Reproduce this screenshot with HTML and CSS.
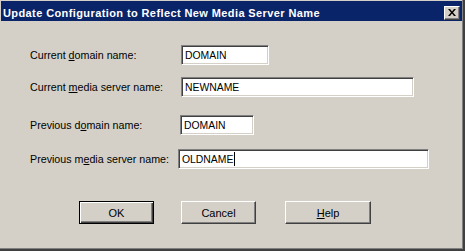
FILE: index.html
```html
<!DOCTYPE html>
<html lang="en">
<head>
<meta charset="UTF-8" />
<title>Update Configuration to Reflect New Media Server Name</title>
<link rel="stylesheet" href="styles.css">
</head>
<body>

<div class="window">
  <div class="titlebar">
    <span class="title">Update Configuration to Reflect New Media Server Name</span>
    <button class="close-button" title="Close">
      <svg width="8" height="7" viewBox="0 0 8 7"><path d="M0 0h2l2 2.5L6 0h2L5 3.5 8 7H6L4 4.5 2 7H0l3-3.5z" fill="#000"/></svg>
    </button>
  </div>

  <div class="content">
    <div class="row">
      <span class="label">Current <u>d</u>omain name:</span>
      <div class="field field-cur-domain">DOMAIN</div>
    </div>
    <div class="row row-cur-server">
      <span class="label">Current <u>m</u>edia server name:</span>
      <div class="field field-cur-server">NEWNAME</div>
    </div>
    <div class="row row-prev-domain">
      <span class="label">Previous d<u>o</u>main name:</span>
      <div class="field field-prev-domain">DOMAIN</div>
    </div>
    <div class="row row-prev-server">
      <span class="label">Previous m<u>e</u>dia server name:</span>
      <div class="field field-prev-server">OLDNAME<span class="caret"></span></div>
    </div>

    <div class="buttons">
      <button class="btn btn-default">OK</button>
      <button class="btn btn-cancel">Cancel</button>
      <button class="btn btn-help"><u>H</u>elp</button>
    </div>
  </div>
</div>

</body>
</html>
```

FILE: styles.css
```css
html, body {
  margin: 0; padding: 0;
  width: 465px; height: 251px;
  overflow: hidden;
  background: #d4d0c8;
  font-family: "Liberation Sans", Arial, sans-serif;
  font-size: 11px;
  color: #000;
}

.window {
  box-sizing: border-box;
  width: 465px;
  height: 251px;
  padding: 1px 0 0 1px;
  border-right: 2px solid #404040;
  border-bottom: 2px solid #404040;
  box-shadow: inset -1px -1px #808080;
  background: #d4d0c8;
}

.titlebar {
  height: 20px;
  margin-right: 1px;
  background: #0a246a;
  display: flex;
  align-items: center;
  justify-content: space-between;
  padding: 0 2px 0 2px;
}

.title {
  color: #fff;
  font-weight: bold;
  font-size: 11px;
  letter-spacing: 0.4px;
  white-space: nowrap;
  padding-top: 3px;
}

.close-button {
  box-sizing: border-box;
  width: 16px;
  height: 14px;
  margin-top: 3px;
  padding: 0;
  background: #d4d0c8;
  border: 1px solid;
  border-color: #fff #404040 #404040 #fff;
  box-shadow: inset -1px -1px #808080;
  display: flex;
  align-items: center;
  justify-content: center;
}

.content {
  padding: 24px 0 0 29px;
}

.row {
  display: flex;
  align-items: center;
  height: 20px;
}
.row-cur-server { margin-top: 12px; }
.row-prev-domain { margin-top: 18px; }
.row-prev-server { margin-top: 14px; }

.label {
  width: 151px;
  font-size: 10.7px;
  white-space: nowrap;
}

.field {
  box-sizing: border-box;
  height: 20px;
  padding: 0 3px;
  font-size: 10.4px;
  background: #fff;
  border: 1px solid;
  border-color: #808080 #fff #fff #808080;
  box-shadow: inset 1px 1px #404040, inset -1px -1px #d4d0c8;
  display: flex;
  align-items: center;
  white-space: nowrap;
}
.field-cur-domain { width: 88px; }
.field-cur-server { width: 233px; }
.field-prev-domain { width: 74px; margin-left: -1px; }
.field-prev-server { width: 251px; margin-left: -3px; }

.caret {
  display: inline-block;
  width: 1px;
  height: 14px;
  margin-left: 1px;
  background: #000;
}

.buttons {
  display: flex;
  margin: 32px 0 0 49px;
}

.btn {
  box-sizing: border-box;
  width: 75px;
  height: 23px;
  padding: 0;
  font-family: "Liberation Sans", Arial, sans-serif;
  font-size: 11px;
  color: #000;
  background: #d4d0c8;
  border: 1px solid;
  border-color: #fff #404040 #404040 #fff;
  box-shadow: inset -1px -1px #808080;
}
.btn-default {
  border: 1px solid #000;
  box-shadow: inset 1px 1px #fff, inset -1px -1px #404040, inset -2px -2px #808080;
}
.btn-cancel { margin-left: 27px; }
.btn-help { width: 86px; margin-left: 29px; }
```
